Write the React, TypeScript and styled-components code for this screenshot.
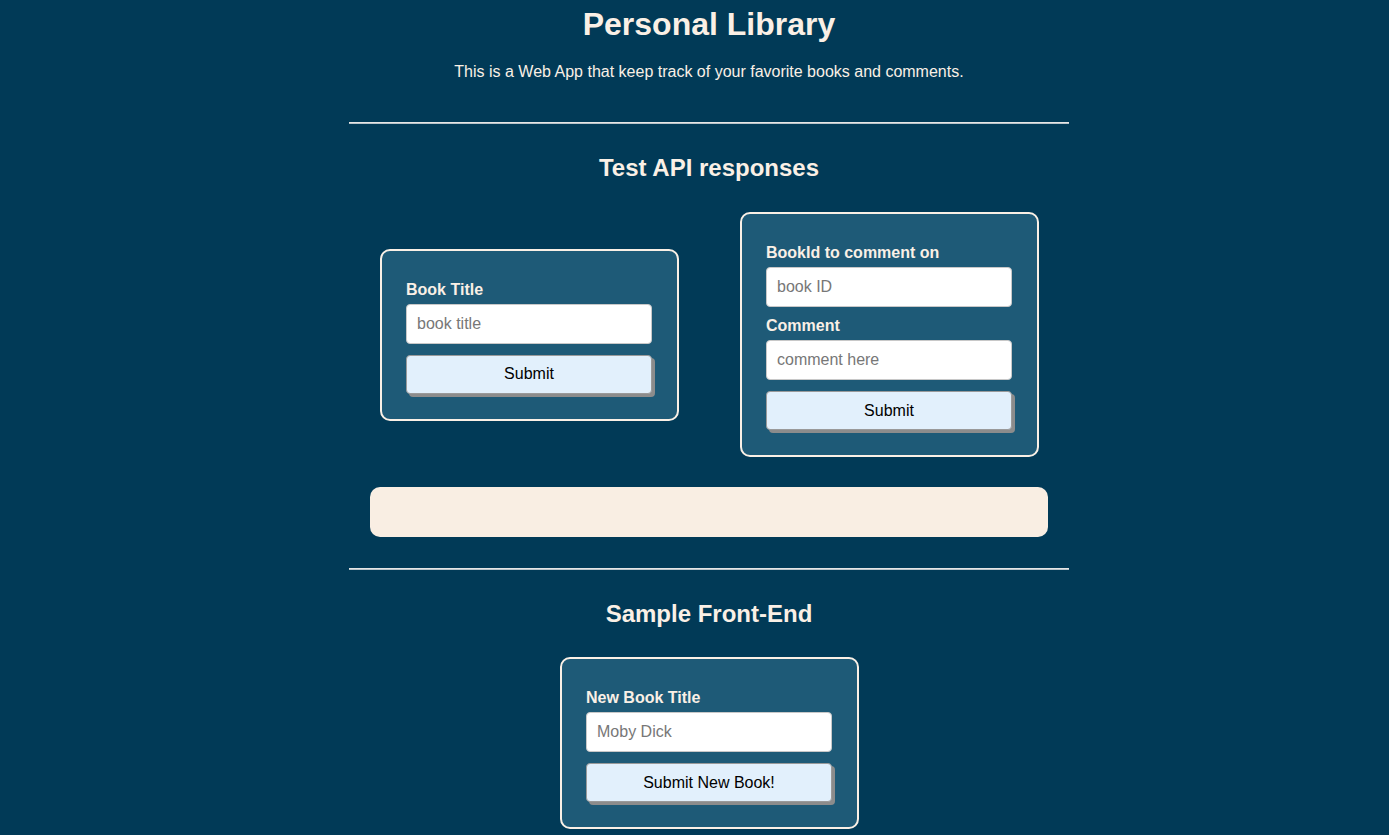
import React from "react";
import styled, { createGlobalStyle } from "styled-components";

const GlobalStyle = createGlobalStyle`
  html, body {
    margin: 0;
    padding: 0;
    background: #013a57;
  }
  body {
    font-family: "Liberation Sans", Arial, sans-serif;
    color: #faf0e6;
  }
`;

const Page = styled.div`
  display: flex;
  flex-direction: column;
  align-items: center;
  padding-left: 29px;
  min-height: 835px;
`;

const Header = styled.header`
  display: flex;
  flex-direction: column;
  align-items: center;
`;

const Title = styled.h1`
  font-size: 32px;
  font-weight: bold;
  margin: 6px 0 0;
  line-height: 37px;
`;

const Subtitle = styled.p`
  font-size: 16px;
  margin: 20px 0 0;
  line-height: 18px;
`;

const Rule = styled.hr<{ $top: number }>`
  width: 720px;
  margin: ${(p) => p.$top}px 0 0;
  border: none;
  border-top: 1px solid #e6e6e6;
  border-bottom: 1px solid #b9c3c9;
  height: 0;
`;

const SectionTitle = styled.h2`
  font-size: 24px;
  font-weight: bold;
  margin: 30px 0 0;
  line-height: 28px;
`;

const CardRow = styled.div`
  display: flex;
  align-items: center;
  gap: 61px;
  margin: 30px 0 0 1px;
`;

const Card = styled.form`
  width: 299px;
  box-sizing: border-box;
  border: 2px solid #faf0e6;
  border-radius: 10px;
  background: #1e5a77;
  padding: 30px 25px 22px 24px;
  display: flex;
  flex-direction: column;
`;

const Label = styled.label`
  font-size: 16px;
  font-weight: bold;
  line-height: 18px;
  margin-bottom: 5px;
`;

const Input = styled.input<{ $mb?: number }>`
  box-sizing: border-box;
  width: 246px;
  height: 40px;
  border: 1px solid #c8c8c8;
  border-radius: 4px;
  background: #fff;
  padding: 0 10px;
  font-family: "Liberation Sans", Arial, sans-serif;
  font-size: 16px;
  color: #333;
  margin-bottom: ${(p) => p.$mb ?? 11}px;
  &::placeholder {
    color: #777;
  }
`;

const Button = styled.button`
  box-sizing: border-box;
  width: 246px;
  height: 39px;
  border: 1px solid #9a9a9a;
  border-radius: 4px;
  background: #e2f0fc;
  box-shadow: 3px 3px 0 #8c8c8c;
  font-family: "Liberation Sans", Arial, sans-serif;
  font-size: 16px;
  color: #000;
  margin-bottom: 3px;
`;

const Response = styled.div`
  width: 678px;
  height: 50px;
  border-radius: 10px;
  background: #f9eee3;
  margin-top: 30px;
`;

const Footer = styled.div`
  margin: 29px 0 0 1px;
`;

export default function App() {
  return (
    <>
      <GlobalStyle />
      <Page>
        <Header>
          <Title>Personal Library</Title>
          <Subtitle>This is a Web App that keep track of your favorite books and comments.</Subtitle>
        </Header>
        <Rule $top={41} />
        <SectionTitle>Test API responses</SectionTitle>
        <CardRow>
          <Card onSubmit={(e) => e.preventDefault()}>
            <Label>Book Title</Label>
            <Input placeholder="book title" />
            <Button type="submit">Submit</Button>
          </Card>
          <Card onSubmit={(e) => e.preventDefault()}>
            <Label>BookId to comment on</Label>
            <Input placeholder="book ID" $mb={10} />
            <Label>Comment</Label>
            <Input placeholder="comment here" />
            <Button type="submit">Submit</Button>
          </Card>
        </CardRow>
        <Response />
        <Rule $top={31} />
        <SectionTitle>Sample Front-End</SectionTitle>
        <Footer>
          <Card onSubmit={(e) => e.preventDefault()}>
            <Label>New Book Title</Label>
            <Input placeholder="Moby Dick" />
            <Button type="submit">Submit New Book!</Button>
          </Card>
        </Footer>
      </Page>
    </>
  );
}
